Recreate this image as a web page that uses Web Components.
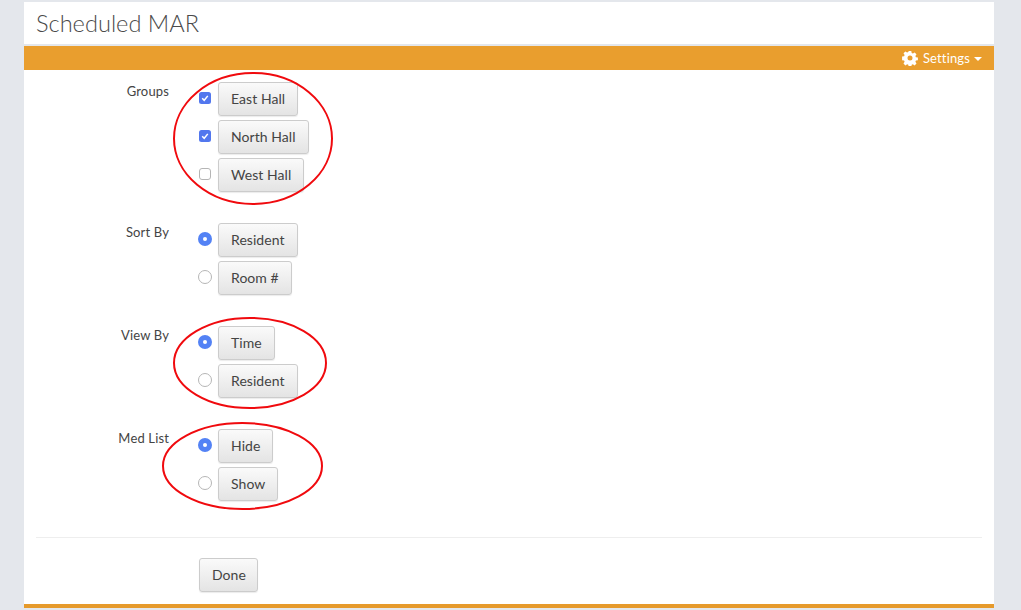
<!DOCTYPE html>
<html>
<head>
<meta charset="utf-8">
<title>Scheduled MAR</title>
<style>
  html, body { margin: 0; height: 100%; background: #e4e7ec; overflow: hidden; }
  body { font-family: Lato, "Liberation Sans", sans-serif; }
</style>
</head>
<body>
<mar-panel heading="Scheduled MAR">
  <mar-group label="Groups" ring="149,-10,160,133">
    <mar-choice type="check" checked>East Hall</mar-choice>
    <mar-choice type="check" checked>North Hall</mar-choice>
    <mar-choice type="check">West Hall</mar-choice>
  </mar-group>
  <mar-group label="Sort By">
    <mar-choice type="radio" checked>Resident</mar-choice>
    <mar-choice type="radio">Room #</mar-choice>
  </mar-group>
  <mar-group label="View By" ring="149,-9,154,92">
    <mar-choice type="radio" checked>Time</mar-choice>
    <mar-choice type="radio">Resident</mar-choice>
  </mar-group>
  <mar-group label="Med List" ring="138,-7,161,88">
    <mar-choice type="radio" checked>Hide</mar-choice>
    <mar-choice type="radio">Show</mar-choice>
  </mar-group>
</mar-panel>

<script>
class MarPanel extends HTMLElement {
  connectedCallback() {
    this.attachShadow({ mode: 'open' });
    this.shadowRoot.innerHTML = `
      <style>
        :host {
          display: block;
          margin: 2px 27px 0 24px;
          background: #fff;
          color: #444;
        }
        h1 {
          margin: 0;
          height: 42px;
          padding: 0 12px;
          font-size: 23.6px;
          font-weight: 300;
          line-height: 42px;
          color: #4a4a4a;
          border-bottom: 2px solid #e4e7ec;
        }
        .bar {
          height: 24px;
          background: #e99e2e;
          color: #fff;
          display: flex;
          align-items: center;
          justify-content: flex-end;
          padding-right: 12px;
          font-size: 13px;
          letter-spacing: .15px;
          gap: 5px;
        }
        .bar svg { display: block; }
        .caret {
          border-top: 4px solid #fff;
          border-left: 4px solid transparent;
          border-right: 4px solid transparent;
          margin-left: -1px;
          margin-top: 2px;
        }
        .body {
          padding: 12px 0 0;
          display: flex;
          flex-direction: column;
          gap: 31px;
        }
        hr {
          border: 0;
          border-top: 1px solid #eee;
          margin: 36px 12px 20px;
        }
        .foot { padding: 0 0 12px 175px; }
        .edge { height: 4px; background: #e69a2b; }
        mar-button { font-size: 14px; }
      </style>
      <h1>${this.getAttribute('heading')}</h1>
      <div class="bar">
        <svg width="16" height="16" viewBox="0 0 16 16" aria-hidden="true">
          <path fill="#fff" fill-rule="evenodd" d="M6.7 1h2.6l.4 2 1.2.5 1.7-1.1 1.9 1.9-1.1 1.7.5 1.2 2 .4v2.6l-2 .4-.5 1.2 1.1 1.7-1.9 1.9-1.7-1.1-1.2.5-.4 2H6.7l-.4-2-1.2-.5-1.7 1.1-1.9-1.9 1.1-1.7-.5-1.2-2-.4V6.6l2-.4.5-1.2-1.1-1.7 1.9-1.9 1.7 1.1 1.2-.5zM8 5.5a2.5 2.5 0 1 0 0 5 2.5 2.5 0 0 0 0-5z"/>
        </svg>
        <span>Settings</span>
        <span class="caret"></span>
      </div>
      <div class="body"><slot></slot></div>
      <hr>
      <div class="foot"><mar-button tight>Done</mar-button></div>
      <div class="edge"></div>
    `;
  }
}

class MarGroup extends HTMLElement {
  connectedCallback() {
    this.attachShadow({ mode: 'open' });
    const ring = (this.getAttribute('ring') || '').split(',').map(Number);
    let ringSvg = '';
    if (ring.length === 4) {
      const [x, y, w, h] = ring;
      ringSvg = `<svg class="ring" style="left:${x}px;top:${y}px" width="${w}" height="${h}" viewBox="0 0 ${w} ${h}" aria-hidden="true">
        <ellipse cx="${w / 2}" cy="${h / 2}" rx="${w / 2 - 1}" ry="${h / 2 - 1}" fill="none" stroke="#f00a0e" stroke-width="2"/>
      </svg>`;
    }
    this.shadowRoot.innerHTML = `
      <style>
        :host { display: grid; grid-template-columns: 145px 1fr; position: relative; }
        .label {
          font-size: 13px;
          letter-spacing: .15px;
          line-height: 18px;
          text-align: right;
          color: #444;
        }
        .list { display: flex; flex-direction: column; gap: 4px; padding-left: 30px; align-items: flex-start; }
        .ring { position: absolute; pointer-events: none; overflow: visible; }
      </style>
      <div class="label">${this.getAttribute('label')}</div>
      <div class="list"><slot></slot></div>
      ${ringSvg}
    `;
  }
}

class MarChoice extends HTMLElement {
  connectedCallback() {
    this.attachShadow({ mode: 'open' });
    const radio = this.getAttribute('type') === 'radio';
    const on = this.hasAttribute('checked');
    let mark;
    if (radio) {
      mark = on
        ? '<circle cx="7" cy="7" r="7" fill="#5382f5"/><circle cx="7" cy="7" r="2" fill="#fff"/>'
        : '<circle cx="7" cy="7" r="6.5" fill="#fff" stroke="#b5b5b5"/>';
    } else {
      mark = on
        ? '<rect width="12" height="12" rx="2.5" fill="#5277ee"/><path d="M3.2 6.3l2 2 3.6-4.4" fill="none" stroke="#fff" stroke-width="1.5"/>'
        : '<rect x=".5" y=".5" width="11" height="11" rx="2.5" fill="#fff" stroke="#b5b5b5"/>';
    }
    const size = radio ? 14 : 12;
    this.shadowRoot.innerHTML = `
      <style>
        :host { display: flex; align-items: center; height: 34px; }
        .box { width: 20px; margin-left: ${radio ? -1 : 0}px; margin-right: ${radio ? 0 : -1}px; display: flex; margin-top: -2px; }
        svg { display: block; }
        mar-button { font-size: 14px; }
      </style>
      <span class="box"><svg width="${size}" height="${size}" viewBox="0 0 ${size} ${size}" aria-hidden="true">${mark}</svg></span>
      <mar-button><slot></slot></mar-button>
    `;
  }
}

class MarButton extends HTMLElement {
  connectedCallback() {
    this.attachShadow({ mode: 'open' });
    this.shadowRoot.innerHTML = `
      <style>
        :host { display: inline-block; }
        button {
          display: block;
          height: 34px;
          padding: 0 12px 2px;
          font: inherit;
          letter-spacing: .06px;
          color: #444;
          border: 1px solid #ccc;
          border-radius: 3px;
          background: linear-gradient(#fafafa, #e4e4e4);
          box-shadow: 0 1px 1px rgba(0, 0, 0, 0.08);
        }
        :host([tight]) button { padding-right: 11px; }
      </style>
      <button type="button"><slot></slot></button>
    `;
  }
}

customElements.define('mar-panel', MarPanel);
customElements.define('mar-group', MarGroup);
customElements.define('mar-choice', MarChoice);
customElements.define('mar-button', MarButton);
</script>
</body>
</html>
